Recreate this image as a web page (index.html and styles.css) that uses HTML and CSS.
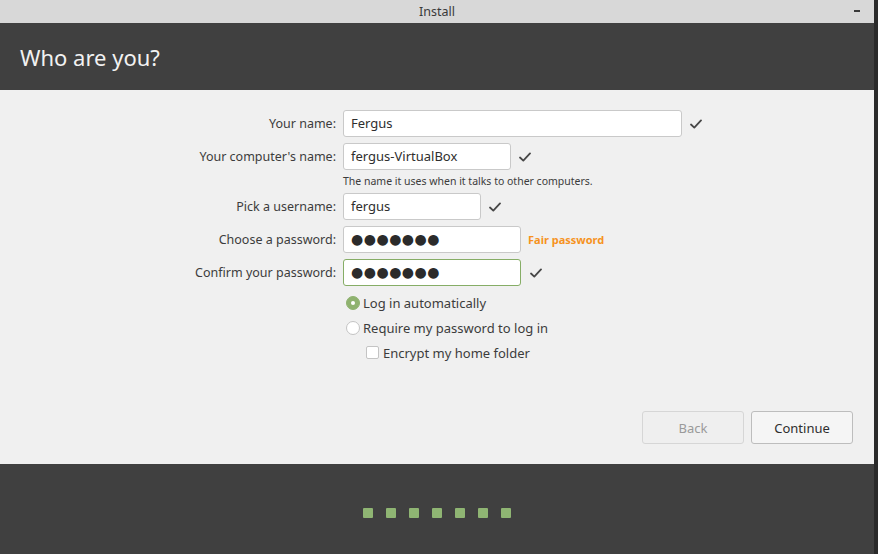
FILE: index.html
```html
<!DOCTYPE html>
<html>
<head>
<meta charset="utf-8">
<link rel="stylesheet" href="styles.css">
</head>
<body>
<div class="window">
  <div class="titlebar">
    <span></span>
    <span class="title">Install</span>
    <span class="controls"><span class="min"></span></span>
  </div>
  <div class="header"><h1>Who are you?</h1></div>
  <div class="content">
    <div class="form">
      <label class="lbl">Your name:</label>
      <div class="field">
        <div class="input w-name">Fergus</div>
        <svg class="check" viewBox="0 0 12 10"><path d="M1 5.5 L4.3 8.6 L11 1.4"/></svg>
      </div>
      <label class="lbl">Your computer's name:</label>
      <div class="field">
        <div class="input w-comp">fergus-VirtualBox</div>
        <svg class="check" viewBox="0 0 12 10"><path d="M1 5.5 L4.3 8.6 L11 1.4"/></svg>
      </div>
      <div class="hint">The name it uses when it talks to other computers.</div>
      <label class="lbl">Pick a username:</label>
      <div class="field">
        <div class="input w-user">fergus</div>
        <svg class="check" viewBox="0 0 12 10"><path d="M1 5.5 L4.3 8.6 L11 1.4"/></svg>
      </div>
      <label class="lbl">Choose a password:</label>
      <div class="field">
        <div class="input w-pass dots">●●●●●●●</div>
        <span class="strength">Fair password</span>
      </div>
      <label class="lbl">Confirm your password:</label>
      <div class="field">
        <div class="input w-pass dots ok">●●●●●●●</div>
        <svg class="check check-wide" viewBox="0 0 12 10"><path d="M1 5.5 L4.3 8.6 L11 1.4"/></svg>
      </div>
      <div class="options">
        <div class="opt"><span class="radio on"></span><span>Log in automatically</span></div>
        <div class="opt"><span class="radio"></span><span>Require my password to log in</span></div>
        <div class="opt sub"><span class="box"></span><span>Encrypt my home folder</span></div>
      </div>
    </div>
    <div class="buttons">
      <button class="btn disabled">Back</button>
      <button class="btn">Continue</button>
    </div>
  </div>
  <div class="footer">
    <div class="dots-row">
      <span class="dot"></span><span class="dot"></span><span class="dot"></span><span class="dot"></span><span class="dot"></span><span class="dot"></span><span class="dot"></span>
    </div>
  </div>
</div>
</body>
</html>
```
FILE: styles.css
```css
* { box-sizing: border-box; }
html, body { margin: 0; padding: 0; }
body {
  width: 878px;
  height: 554px;
  background: #2a2a2a;
  font-family: "Noto Sans", "DejaVu Sans", sans-serif;
  color: #3c3c3c;
  overflow: hidden;
}
.window {
  width: 874px;
  height: 554px;
  display: flex;
  flex-direction: column;
}
.titlebar {
  height: 23px;
  flex: none;
  background: #d8d8d8;
  display: grid;
  grid-template-columns: 1fr auto 1fr;
  align-items: center;
  font-size: 12.5px;
  color: #3a3a3a;
}
.title { line-height: 23px; }
.controls { display: flex; justify-content: flex-end; padding-right: 14px; }
.min { width: 6px; height: 2px; background: #3a3a3a; margin-top: -1px; }
.header {
  height: 67px;
  flex: none;
  background: #404040;
  display: flex;
  align-items: center;
  padding-left: 20px;
}
.header h1 {
  margin: 0;
  font-weight: normal;
  font-size: 22px;
  color: #f2f2f2;
  padding-top: 1px;
}
.content {
  flex: 1;
  background: #f0f0f0;
  display: flex;
  flex-direction: column;
  padding: 20px 21px 20px 0;
}
.form {
  display: grid;
  grid-template-columns: 336px auto;
  column-gap: 7px;
  row-gap: 6px;
  align-items: center;
  justify-items: start;
}
.lbl {
  justify-self: end;
  font-size: 12.5px;
  color: #3c3c3c;
}
.field {
  display: flex;
  align-items: center;
  gap: 8px;
}
.input {
  height: 27px;
  background: #fff;
  border: 1px solid #c9c9c9;
  border-radius: 3px;
  padding-left: 7px;
  font-size: 13px;
  line-height: 25px;
  color: #2e2e2e;
}
.w-name { width: 339px; }
.w-comp { width: 168px; }
.w-user { width: 138px; }
.w-pass { width: 178px; }
.dots {
  font-family: "DejaVu Sans", sans-serif;
  font-size: 14px;
  letter-spacing: 0.5px;
  color: #2b2b2b;
}
.input.ok { border-color: #86ad66; }
.check { width: 12px; height: 10px; flex: none; }
.check path { fill: none; stroke: #474747; stroke-width: 1.8; stroke-linecap: round; stroke-linejoin: round; }
.check-wide { margin-left: 1px; }
.strength {
  font-size: 11px;
  font-weight: bold;
  color: #f6931e;
  margin-left: -1px;
}
.hint {
  grid-column: 2;
  font-size: 10.5px;
  line-height: 11px;
  color: #3c3c3c;
}
.options {
  grid-column: 2;
  display: flex;
  flex-direction: column;
  margin-top: -2px;
}
.opt {
  height: 25px;
  display: flex;
  align-items: center;
  gap: 3px;
  padding-left: 3px;
  font-size: 13px;
  color: #3c3c3c;
}
.opt.sub { padding-left: 23px; gap: 4px; }
.radio {
  width: 14px;
  height: 14px;
  border-radius: 50%;
  border: 1px solid #c4c4c4;
  background: #fff;
  flex: none;
}
.radio.on {
  background: #8fb26f;
  border-color: #8fb26f;
  display: flex;
  align-items: center;
  justify-content: center;
}
.radio.on::after {
  content: "";
  width: 4px;
  height: 4px;
  border-radius: 50%;
  background: #fff;
}
.box {
  width: 13px;
  height: 13px;
  border: 1px solid #c4c4c4;
  border-radius: 2px;
  background: #fff;
  flex: none;
}
.buttons {
  margin-top: auto;
  display: flex;
  justify-content: flex-end;
  gap: 7px;
}
.btn {
  width: 102px;
  height: 33px;
  border: 1px solid #bdbdbd;
  border-radius: 3px;
  background: #f5f5f5;
  font-family: "Noto Sans", "DejaVu Sans", sans-serif;
  font-size: 13px;
  color: #2e2e2e;
  padding: 0;
}
.btn.disabled {
  border-color: #d6d6d6;
  background: #efefef;
  color: #9a9a9a;
}
.footer {
  height: 90px;
  flex: none;
  background: #404040;
  padding-top: 44px;
  display: flex;
  justify-content: center;
}
.dots-row { display: flex; gap: 13px; height: 10px; }
.dot {
  width: 10px;
  height: 10px;
  border-radius: 1px;
  background: #8fb573;
}
```
